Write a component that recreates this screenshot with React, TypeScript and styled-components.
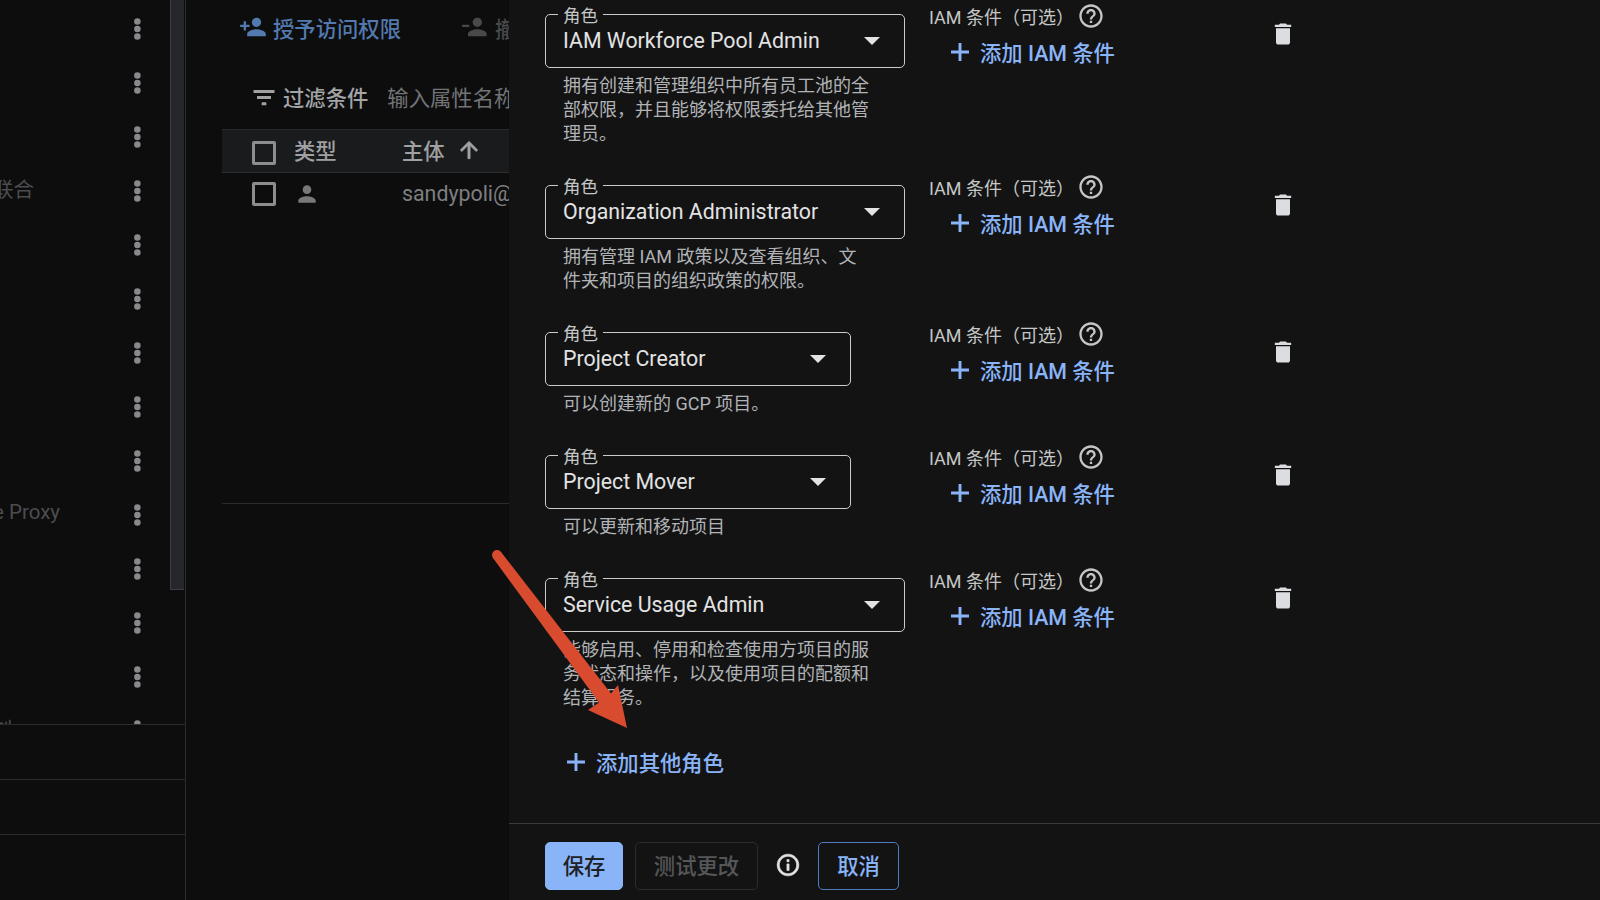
import styled, { createGlobalStyle } from "styled-components"

const GlobalStyle = createGlobalStyle`
  html, body {
    margin: 0;
    height: 100%;
    background: #0d0d0e;
    font-family: Roboto, "Noto Sans CJK SC", sans-serif;
  }
  * { box-sizing: border-box; }
`

const Page = styled.div`
  position: relative;
  display: grid;
  grid-template-columns: 186px 323px 1fr;
  width: 1600px;
  height: 900px;
  overflow: hidden;
`

const Sidebar = styled.aside`
  display: flex;
  flex-direction: column;
  border-right: 1px solid #2a2b2d;
  overflow: hidden;
`

const SideTop = styled.div`
  display: flex;
  height: 724px;
  overflow: hidden;
`

const SideList = styled.div`
  width: 170px;
  padding-top: 2px;
`

const SideRow = styled.div`
  display: flex;
  align-items: center;
  height: 54px;
`

const SideLabel = styled.div<{ $end: number }>`
  display: flex;
  justify-content: flex-end;
  width: ${p => p.$end}px;
  overflow: hidden;
  margin-right: ${p => 122 - p.$end}px;
  margin-bottom: 6px;
  font-size: 20.5px;
  color: #4c4c4e;
  white-space: nowrap;
  flex-shrink: 0;
`

const Kebab = styled.svg`
  width: 30px;
  height: 30px;
  fill: #88898c;
  flex-shrink: 0;
`

const ScrollTrack = styled.div`
  width: 15px;
`

const ScrollThumb = styled.div`
  width: 14px;
  height: 590px;
  background: #26272b;
  border-left: 1px solid #3c3d41;
  border-bottom: 1px solid #3c3d41;
`

const SideFoot = styled.div`
  height: 55px;
  border-top: 1px solid #2a2b2d;
`

const Middle = styled.main`
  overflow: hidden;
  white-space: nowrap;
`

const Actions = styled.div`
  display: flex;
  align-items: center;
  height: 56px;
  padding: 0 0 2px 53px;
`

const ActionButton = styled.div<{ $dim?: boolean }>`
  display: flex;
  align-items: center;
  flex-shrink: 0;
  gap: 6px;
  margin-right: ${p => (p.$dim ? 0 : "60px")};
  font-size: 21.33px;
  font-weight: 500;
  color: ${p => (p.$dim ? "#48494b" : "#527aaf")};

  svg {
    width: 28px;
    height: 28px;
    fill: currentColor;
    flex-shrink: 0;
  }
`

const FilterBar = styled.div`
  display: flex;
  align-items: center;
  height: 73px;
  padding: 7px 0 0 65px;
  font-size: 21.33px;

  svg {
    width: 28px;
    height: 28px;
    fill: #a0a1a3;
    flex-shrink: 0;
    margin: 1px 5px 0 -1px;
  }
`

const FilterTitle = styled.span`
  font-weight: 500;
  color: #a3a4a6;
  margin-right: 19px;
`

const FilterInput = styled.span`
  color: #737476;
`

const Table = styled.div`
  margin-left: 36px;
`

const Box = styled.span`
  width: 24px;
  height: 24px;
  border: 3px solid #8c8d8f;
  border-radius: 2px;
  flex-shrink: 0;
  margin-top: 1px;
`

const HeadRow = styled.div`
  display: flex;
  align-items: center;
  height: 44px;
  padding-left: 30px;
  background: #1a1b1d;
  border-top: 1px solid #28292b;
  border-bottom: 1px solid #2e2f31;

  ${Box} {
    margin-top: 3px;
  }
`

const BodyRow = styled.div`
  display: flex;
  align-items: flex-start;
  height: 331px;
  padding: 8px 0 0 30px;
  border-bottom: 1px solid #2a2b2d;
`

const TypeCell = styled.div`
  display: flex;
  justify-content: flex-start;
  width: 126px;
  padding-left: 18px;
  flex-shrink: 0;
`

const HeadCell = styled.div`
  display: flex;
  align-items: center;
  padding-bottom: 3px;
  font-size: 21.33px;
  font-weight: 500;
  color: #a0a1a3;

  svg {
    width: 26px;
    height: 26px;
    fill: #a0a1a3;
    stroke: #a0a1a3;
    stroke-width: 0.7;
    margin-left: 11px;
  }
`

const PersonIcon = styled.svg`
  width: 26px;
  height: 26px;
  fill: #77787a;
`

const Principal = styled.span`
  font-size: 21.33px;
  line-height: 26px;
  color: #7e7f81;
`

const Panel = styled.section`
  display: flex;
  flex-direction: column;
  background: #131314;
`

const PanelBody = styled.div`
  flex: 1;
  padding: 5px 0 0 36px;
  overflow: hidden;
`

const RoleRow = styled.div`
  display: flex;
  padding-bottom: 30px;
`

const RoleCol = styled.div`
  width: 360px;
  padding-top: 9px;
  flex-shrink: 0;
`

const RoleField = styled.div<{ $short?: boolean }>`
  position: relative;
  display: flex;
  align-items: center;
  justify-content: space-between;
  width: ${p => (p.$short ? "306px" : "360px")};
  height: 54px;
  padding: 0 24px 1px 17px;
  border: 1px solid #c9cbce;
  border-radius: 5px;
  font-size: 21.33px;
  color: #e3e3e3;
`

const RoleLabel = styled.span`
  position: absolute;
  top: -6px;
  left: 12px;
  padding: 0 5px;
  height: 13px;
  background: #131314;
  font-size: 17.5px;
  line-height: 14px;
  color: #c4c7c5;
`

const Caret = styled.span`
  width: 0;
  height: 0;
  margin-top: 1px;
  border-left: 8px solid transparent;
  border-right: 8px solid transparent;
  border-top: 8px solid #e3e3e3;
`

const RoleHint = styled.p`
  width: 310px;
  margin: 6px 0 0 18px;
  font-size: 18px;
  line-height: 24px;
  color: #b1b3b6;
`

const CondCol = styled.div`
  width: 340px;
  margin: -1px 0 0 24px;
  flex-shrink: 0;
`

const CondLabel = styled.div`
  display: flex;
  align-items: center;
  height: 24px;
  font-size: 18px;
  color: #c4c7c5;

  svg {
    width: 28px;
    height: 28px;
    fill: #c4c7c5;
    margin-left: 3px;
    margin-bottom: 1px;
  }
`

const AddLink = styled.div<{ $indent: number }>`
  display: flex;
  align-items: center;
  gap: 6px;
  margin: 0 0 0 ${p => p.$indent}px;
  font-size: 21.33px;
  font-weight: 500;
  color: #8ab4f8;

  svg {
    width: 28px;
    height: 28px;
    fill: #8ab4f8;
  }
`

const CondAdd = styled(AddLink)`
  margin-top: 8px;
`

const OtherRole = styled(AddLink)`
  margin-top: 6px;
`

const TrashIcon = styled.svg`
  width: 28px;
  height: 28px;
  fill: #dcdde1;
  margin-top: 15px;
`

const Footer = styled.footer`
  display: flex;
  align-items: flex-start;
  gap: 12px;
  height: 77px;
  padding: 18px 0 0 36px;
  border-top: 1px solid #3a3b3d;
`

const Button = styled.button<{ $kind: "primary" | "disabled" | "outline" }>`
  height: 48px;
  border-radius: 5px;
  font-family: inherit;
  font-size: 21.33px;
  font-weight: 500;
  padding: 0 0 3px;
  background: ${p => (p.$kind === "primary" ? "#8ab4f8" : "transparent")};
  color: ${p => (p.$kind === "primary" ? "#202124" : p.$kind === "disabled" ? "#565759" : "#8ab4f8")};
  border: 1px solid ${p => (p.$kind === "primary" ? "#8ab4f8" : p.$kind === "disabled" ? "#2b2c2e" : "#4f7cbf")};
  width: ${p => (p.$kind === "primary" ? "78px" : p.$kind === "disabled" ? "123px" : "81px")};
`

const InfoIcon = styled.svg`
  width: 26px;
  height: 26px;
  fill: #e3e3e3;
  stroke: #e3e3e3;
  stroke-width: 0.6;
  margin: 10px 5px 0 5px;
`

const Arrow = styled.svg`
  position: absolute;
  left: 485px;
  top: 545px;
  width: 150px;
  height: 190px;
  fill: #d84b2f;
`

const PLUS = "M19.7 13.25h-6.45v6.45h-2.5v-6.45H4.3v-2.5h6.45V4.3h2.5v6.45h6.45z"
const PERSON = "M12 12c2.21 0 4-1.79 4-4s-1.79-4-4-4-4 1.79-4 4 1.79 4 4 4zm0 2c-2.67 0-8 1.34-8 4v2h16v-2c0-2.66-5.33-4-8-4z"

const sideRows: { text?: string; end?: number }[] = [
  {},
  {},
  {},
  { text: "工作负载身份联合", end: 34 },
  {},
  {},
  {},
  {},
  {},
  { text: "Identity-Aware Proxy", end: 60 },
  {},
  {},
  {},
  { text: "安全控制", end: 12 },
]

const roles = [
  { name: "IAM Workforce Pool Admin", hint: "拥有创建和管理组织中所有员工池的全部权限，并且能够将权限委托给其他管理员。" },
  { name: "Organization Administrator", hint: "拥有管理 IAM 政策以及查看组织、文件夹和项目的组织政策的权限。" },
  { name: "Project Creator", hint: "可以创建新的 GCP 项目。", short: true },
  { name: "Project Mover", hint: "可以更新和移动项目", short: true },
  { name: "Service Usage Admin", hint: "能够启用、停用和检查使用方项目的服务状态和操作，以及使用项目的配额和结算服务。" },
]

const App = () => (
  <Page>
    <GlobalStyle />
    <Sidebar>
      <SideTop>
        <SideList>
          {sideRows.map((row, i) => (
            <SideRow key={i}>
              <SideLabel $end={row.end ?? 122}>{row.text}</SideLabel>
              <Kebab viewBox="0 0 24 24">
                <circle cx="12.3" cy="6" r="2.6" />
                <circle cx="12.3" cy="12" r="2.6" />
                <circle cx="12.3" cy="18" r="2.6" />
              </Kebab>
            </SideRow>
          ))}
        </SideList>
        <ScrollTrack>
          <ScrollThumb />
        </ScrollTrack>
      </SideTop>
      <SideFoot />
      <SideFoot />
      <SideFoot />
    </Sidebar>

    <Middle>
      <Actions>
        <ActionButton>
          <svg viewBox="0 0 24 24">
            <path d="M15 12c2.21 0 4-1.79 4-4s-1.79-4-4-4-4 1.79-4 4 1.79 4 4 4zm-9-2V7H4v3H1v2h3v3h2v-3h3v-2H6zm9 4c-2.67 0-8 1.34-8 4v2h16v-2c0-2.66-5.33-4-8-4z" />
          </svg>
          授予访问权限
        </ActionButton>
        <ActionButton $dim>
          <svg viewBox="0 0 24 24">
            <path transform="matrix(-1 0 0 1 24 0)" d="M14 8c0-2.21-1.79-4-4-4S6 5.79 6 8s1.79 4 4 4 4-1.79 4-4zm3 2v2h6v-2h-6zM2 18v2h16v-2c0-2.66-5.33-4-8-4s-8 1.34-8 4z" />
          </svg>
          撤消访问权限
        </ActionButton>
      </Actions>
      <FilterBar>
        <svg viewBox="0 0 24 24">
          <path d="M10 19h4v-2.6h-4V19zM3 6v2.6h18V6H3zm3 7.8h12v-2.6H6v2.6z" />
        </svg>
        <FilterTitle>过滤条件</FilterTitle>
        <FilterInput>输入属性名称或值</FilterInput>
      </FilterBar>
      <Table>
        <HeadRow>
          <Box />
          <TypeCell>
            <HeadCell>类型</HeadCell>
          </TypeCell>
          <HeadCell>
            主体
            <svg viewBox="0 0 24 24">
              <path d="M4 12l1.41 1.41L11 7.83V20h2V7.83l5.58 5.59L20 12l-8-8-8 8z" />
            </svg>
          </HeadCell>
        </HeadRow>
        <BodyRow>
          <Box />
          <TypeCell>
            <PersonIcon viewBox="0 0 24 24">
              <path d={PERSON} />
            </PersonIcon>
          </TypeCell>
          <Principal>sandypoli@example.com</Principal>
        </BodyRow>
      </Table>
    </Middle>

    <Panel>
      <PanelBody>
        {roles.map(role => (
          <RoleRow key={role.name}>
            <RoleCol>
              <RoleField $short={role.short}>
                <RoleLabel>角色</RoleLabel>
                {role.name}
                <Caret />
              </RoleField>
              <RoleHint>{role.hint}</RoleHint>
            </RoleCol>
            <CondCol>
              <CondLabel>
                IAM 条件（可选）
                <svg viewBox="0 0 24 24">
                  <path d="M11 18h2v-2h-2v2zm1-16C6.48 2 2 6.48 2 12s4.48 10 10 10 10-4.48 10-10S17.52 2 12 2zm0 18c-4.41 0-8-3.59-8-8s3.59-8 8-8 8 3.59 8 8-3.59 8-8 8zm0-14c-2.21 0-4 1.79-4 4h2c0-1.1.9-2 2-2s2 .9 2 2c0 2-3 1.75-3 5h2c0-2.25 3-2.5 3-5 0-2.21-1.79-4-4-4z" />
                </svg>
              </CondLabel>
              <CondAdd $indent={17}>
                <svg viewBox="0 0 24 24">
                  <path d={PLUS} />
                </svg>
                添加 IAM 条件
              </CondAdd>
            </CondCol>
            <TrashIcon viewBox="0 0 24 24">
              <path d="M6 19c0 1.1.9 2 2 2h8c1.1 0 2-.9 2-2V7H6v12zM19 4h-3.5l-1-1h-5l-1 1H5v2h14V4z" />
            </TrashIcon>
          </RoleRow>
        ))}
        <OtherRole $indent={17}>
          <svg viewBox="0 0 24 24">
            <path d={PLUS} />
          </svg>
          添加其他角色
        </OtherRole>
      </PanelBody>
      <Footer>
        <Button $kind="primary">保存</Button>
        <Button $kind="disabled">测试更改</Button>
        <InfoIcon viewBox="0 0 24 24">
          <path d="M11 7h2v2h-2zm0 4h2v6h-2zm1-9C6.48 2 2 6.48 2 12s4.48 10 10 10 10-4.48 10-10S17.52 2 12 2zm0 18c-4.41 0-8-3.59-8-8s3.59-8 8-8 8 3.59 8 8-3.59 8-8 8z" />
        </InfoIcon>
        <Button $kind="outline">取消</Button>
      </Footer>
    </Panel>

    <Arrow viewBox="485 545 150 190">
      <circle cx="497" cy="555" r="5" />
      <polygon points="501,552 611,693.5 618,685 627,728 588,710 599,702.5 493,558" />
    </Arrow>
  </Page>
)

export default App
